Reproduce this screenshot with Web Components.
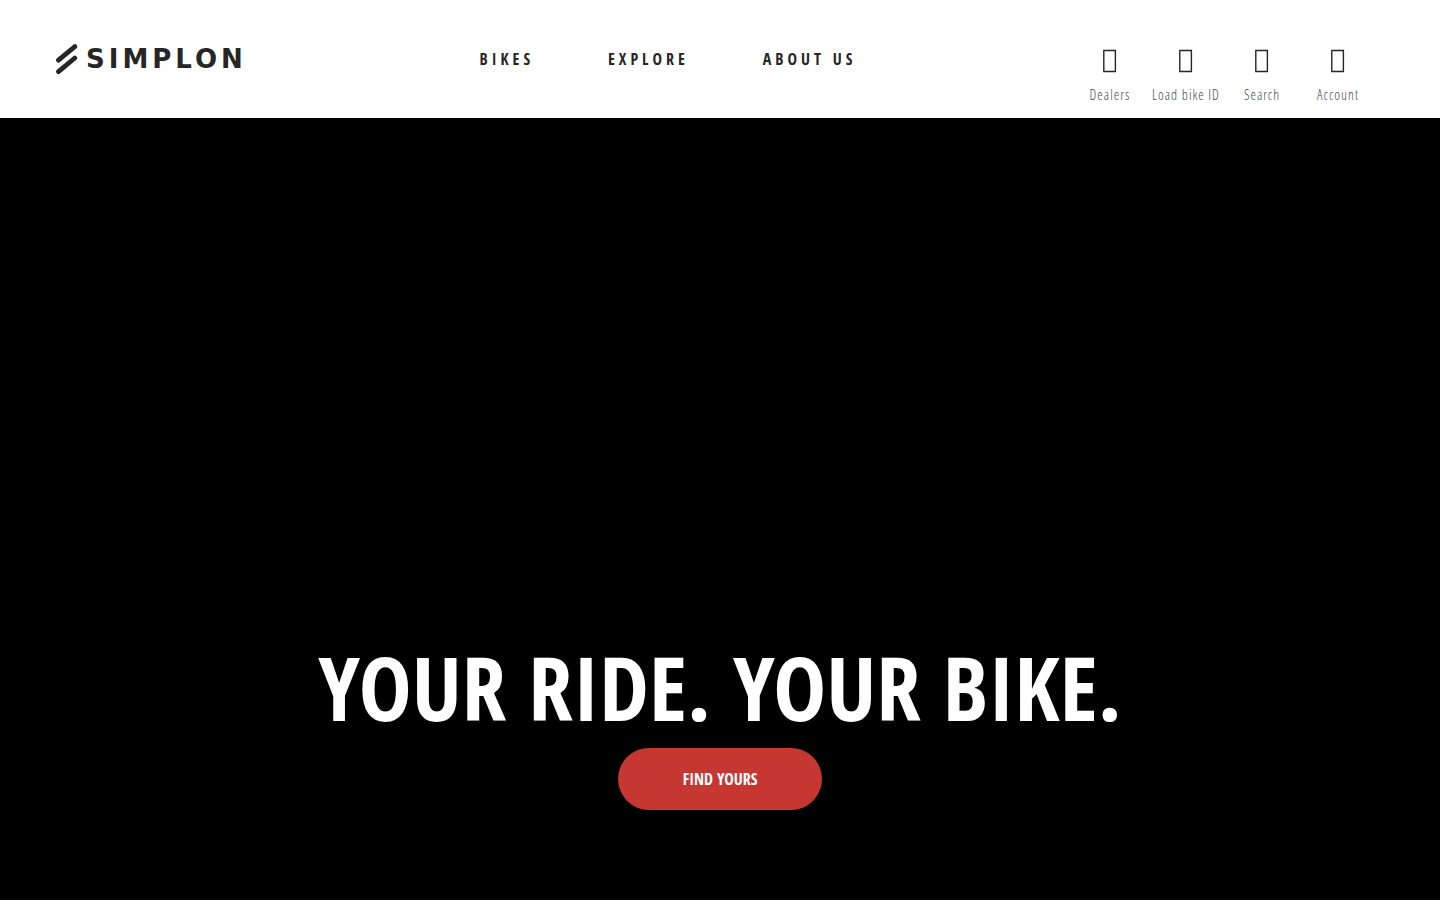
<!DOCTYPE html>
<html lang="en">
<head>
<meta charset="utf-8">
<meta name="viewport" content="width=device-width, initial-scale=1">
<title>SIMPLON</title>
<style>
  :root { --ink: #262626; --red: #c73732; --condensed: "Open Sans Condensed", "Roboto Condensed", sans-serif; }
  body { margin: 0; font-family: var(--condensed); color: var(--ink); background: #fff; }
</style>
</head>
<body>
<simplon-page>
  <simplon-header slot="header">
    <simplon-logo slot="logo"></simplon-logo>
    <nav-link slot="nav" href="#bikes">BIKES</nav-link>
    <nav-link slot="nav" href="#explore">EXPLORE</nav-link>
    <nav-link slot="nav" href="#about">ABOUT US</nav-link>
    <icon-link slot="actions" href="#dealers">Dealers</icon-link>
    <icon-link slot="actions" href="#load">Load bike ID</icon-link>
    <icon-link slot="actions" href="#search">Search</icon-link>
    <icon-link slot="actions" href="#account">Account</icon-link>
  </simplon-header>
  <simplon-hero>YOUR RIDE. YOUR BIKE.<pill-button slot="action">FIND YOURS</pill-button></simplon-hero>
</simplon-page>
<script>
  const define = (name, html, setup) => customElements.define(name, class extends HTMLElement {
    constructor() {
      super();
      this.attachShadow({ mode: 'open' }).innerHTML = html;
      if (setup) setup(this);
    }
  });
  const passHref = el => el.shadowRoot.querySelector('a').setAttribute('href', el.getAttribute('href'));

  define('simplon-page', `
    <style>
      :host { display: flex; flex-direction: column; min-height: 100vh; }
      main { flex: 1; display: grid; }
    </style>
    <slot name="header"></slot><main><slot></slot></main>`);

  define('simplon-header', `
    <style>
      :host { display: block; background: #fff; }
      header { display: flex; justify-content: space-between; align-items: center; min-height: 118px; padding: 0 64px 0 56px; box-sizing: border-box; }
      nav { display: flex; gap: 74px; }
      .actions { display: grid; grid-template-columns: repeat(4, 76px); align-self: end; padding-bottom: 13px; }
    </style>
    <header>
      <slot name="logo"></slot>
      <nav aria-label="Main"><slot name="nav"></slot></nav>
      <div class="actions"><slot name="actions"></slot></div>
    </header>`);

  define('simplon-logo', `
    <style>
      :host { display: block; }
      a { display: flex; align-items: center; gap: 8px; width: 208px; color: var(--ink); text-decoration: none; }
      svg { flex: none; }
      span { font: bold 26px/32px "DejaVu Sans", sans-serif; letter-spacing: 4px; }
    </style>
    <a href="#home">
      <svg width="22" height="32" viewBox="0 0 22 32" aria-hidden="true" fill="none" stroke="currentColor" stroke-width="4.8" stroke-linecap="round" stroke-linejoin="round">
        <path d="M2.5 17.2 18.8 3.6"/>
        <path d="M2.5 28.6 18.8 15"/>
      </svg>
      <span>SIMPLON</span>
    </a>`);

  define('nav-link', `
    <style>
      :host { display: block; }
      a { color: inherit; text-decoration: none; font-weight: 700; font-size: 16px; line-height: 24px; letter-spacing: 4px; white-space: nowrap; }
    </style>
    <a><slot></slot></a>`, passHref);

  define('icon-link', `
    <style>
      :host { display: block; }
      a { display: flex; flex-direction: column; align-items: center; gap: 12px; color: #4a4a4a; text-decoration: none; font-family: "Open Sans Condensed Light", "Roboto Condensed", sans-serif; font-weight: 300; font-size: 14px; line-height: 20px; letter-spacing: 1px; white-space: nowrap; }
      svg { color: var(--ink); }
    </style>
    <a><svg width="14" height="24" viewBox="0 0 14 24" aria-hidden="true"><path d="M.8 1.5h11.6v21H.8z" fill="none" stroke="currentColor" stroke-width="1.4"/></svg><span><slot></slot></span></a>`, passHref);

  define('simplon-hero', `
    <style>
      :host { display: block; background: #000; color: #fff; border-bottom: 2px solid #0c0407; }
      section { display: flex; flex-direction: column; align-items: center; justify-content: flex-end; height: 100%; box-sizing: border-box; padding: 24px 24px 88px; }
      h1 { margin: 0; text-align: center; font-size: 89px; line-height: 122px; font-weight: 700; }
    </style>
    <section><h1><slot></slot></h1><slot name="action"></slot></section>`);

  define('pill-button', `
    <style>
      :host { display: block; }
      button { border: 0; border-radius: 31px; padding: 20px 56px; min-width: 204px; background: var(--red); color: #fff; font: 700 16px/22px var(--condensed); cursor: pointer; display: block; }
    </style>
    <button type="button"><slot></slot></button>`);
</script>
</body>
</html>
